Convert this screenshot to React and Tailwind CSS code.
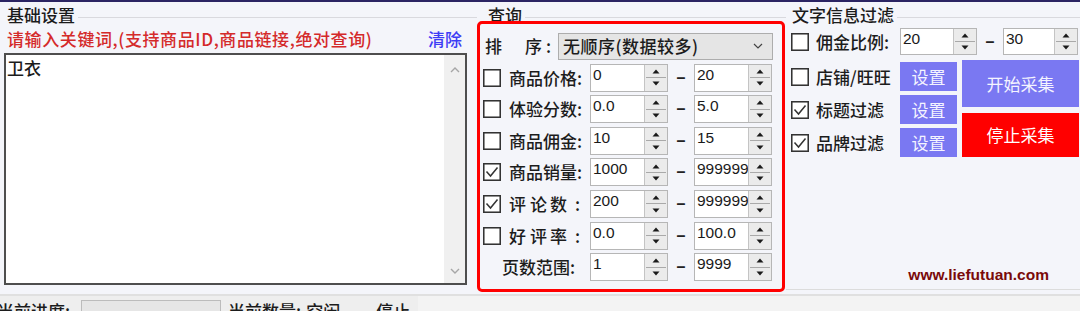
import React from 'react';

const Check = ({ on }) => (
  <svg width="18" height="18" viewBox="0 0 18 18" className="shrink-0">
    <rect x="0.75" y="0.75" width="16.5" height="16.5" fill="#fff" stroke="#333" strokeWidth="1.6" />
    {on && <polyline points="3.5,8.5 7.5,13 14.5,4.5" fill="none" stroke="#333" strokeWidth="1.5" />}
  </svg>
);

const Arrow = ({ up }) => (
  <svg width="8" height="5" viewBox="0 0 8 5">
    <polygon points={up ? '4,0.5 7.5,4.5 0.5,4.5' : '0.5,0.5 7.5,0.5 4,4.5'} fill="#1a1a1a" />
  </svg>
);

const Spin = ({ value, className }) => (
  <div className={`flex h-full shrink-0 border border-[#b6b6b6] bg-white ${className}`}>
    <div className="flex-1 overflow-hidden whitespace-nowrap pl-[2px] pt-[1px] font-['Liberation_Sans',sans-serif] text-[15.5px] leading-[18px] text-[#1a1a1a]">
      {value}
    </div>
    <div className="flex w-[23px] flex-col border-l border-[#c4c4c4] bg-[#ebebeb] p-[1px]">
      <div className="flex flex-1 items-center justify-center border-b border-[#a9a9a9]">
        <Arrow up />
      </div>
      <div className="flex flex-1 items-center justify-center">
        <Arrow />
      </div>
    </div>
  </div>
);

const Dash = ({ className }) => (
  <div className={`flex shrink-0 justify-center font-['Liberation_Sans',sans-serif] text-[16px] font-bold text-[#222] ${className}`}>
    –
  </div>
);

const QueryRow = ({ on, label, a, b }) => (
  <div className="flex h-[28px] items-center pl-[3px]">
    <Check on={on} />
    <div className="ml-[8px] flex w-[81px] text-[17px] font-medium leading-[20px]">{label}</div>
    <Spin value={a} className="w-[78px]" />
    <Dash className="w-[26px]" />
    <Spin value={b} className="w-[78px]" />
  </div>
);

const Spaced = ({ chars }) => (
  <>
    <span>{chars[0]}</span>
    <span className="ml-[4px]">{chars[1]}</span>
    <span className="ml-[3px]">{chars[2]}</span>
    <span className="ml-[8px]">:</span>
  </>
);

const FilterRow = ({ on, label }) => (
  <div className="flex h-[29px] items-center pl-[5px]">
    <Check on={on} />
    <div className="ml-[7px] w-[84px] whitespace-nowrap text-[17px] font-medium leading-[20px]">{label}</div>
    <div className="flex h-full w-[57px] items-center justify-center bg-[#7a78f2] text-[17px] leading-[20px] text-[#f4f4ff]">
      设置
    </div>
  </div>
);

const GroupHead = ({ title, indent }) => (
  <div className="flex h-[26px] shrink-0">
    <div className={`pt-[3px] text-[17px] font-medium leading-[20px] whitespace-nowrap ${indent}`}>{title}</div>
    <div className="ml-[3px] mt-[15px] h-px flex-1 bg-[#d9d9de]" />
  </div>
);

export default function App() {
  return (
    <div className="flex h-[311px] w-[1080px] flex-col overflow-hidden bg-[#f4f5fa] font-['Noto_Sans_CJK_SC',sans-serif] text-[#1c1c1c]">
      <div className="h-[2px] shrink-0 bg-[#2b2463]" />

      <div className="flex h-[292px] shrink-0">
        {/* 基础设置 */}
        <div className="flex w-[477px] shrink-0 flex-col">
          <GroupHead title="基础设置" indent="pl-[7px]" />
          <div className="flex h-[22px] w-[466px] items-center justify-between pl-[7px] pr-[4px] text-[17px] font-medium leading-[20px]">
            <span className="whitespace-nowrap tracking-[0.6px] text-[#d42a2a]">请输入关键词,(支持商品ID,商品链接,绝对查询)</span>
            <span className="text-[#3d3df5]">清除</span>
          </div>
          <div className="ml-[4px] mt-[3px] flex h-[232px] w-[463px] border-2 border-[#4e4e4e] bg-white">
            <div className="flex-1 pl-[1px] pt-[3px] text-[17px] font-medium leading-[20px]">卫衣</div>
            <div className="flex w-[21px] flex-col items-center justify-between bg-[#f0f0f0] pb-[9px] pt-[12px]">
              <svg width="10" height="6" viewBox="0 0 10 6">
                <polyline points="1,5 5,1 9,5" fill="none" stroke="#a6a6a6" strokeWidth="1.4" />
              </svg>
              <svg width="10" height="6" viewBox="0 0 10 6">
                <polyline points="1,1 5,5 9,1" fill="none" stroke="#a6a6a6" strokeWidth="1.4" />
              </svg>
            </div>
          </div>
        </div>

        {/* 查询 */}
        <div className="flex w-[309px] shrink-0 flex-col">
          <GroupHead title="查询" indent="pl-[11px]" />
          <div className="relative z-10 -mt-[7px] h-[271px] w-[308px] rounded-[5px] border-[3px] border-[#ff0000] bg-[#f4f5fa] pt-[8px]">
            <div className="flex flex-col gap-[3.6px]">
              <div className="flex h-[28px] items-center pl-[5px]">
                <div className="flex w-[73px] text-[17px] font-medium leading-[20px]">
                  <span>排</span>
                  <span className="ml-[23px]">序</span>
                  <span className="ml-[4px]">:</span>
                </div>
                <div className="flex h-[27px] w-[215px] items-center justify-between border border-[#adadad] bg-[#e5e5e5] pl-[4px] pr-[9px]">
                  <span className="text-[17px] font-medium leading-[20px] tracking-[0.5px]">无顺序(数据较多)</span>
                  <svg width="10" height="6" viewBox="0 0 10 6">
                    <polyline points="1,1 5,5 9,1" fill="none" stroke="#444" strokeWidth="1.2" />
                  </svg>
                </div>
              </div>
              <QueryRow label="商品价格:" a="0" b="20" />
              <QueryRow label="体验分数:" a="0.0" b="5.0" />
              <QueryRow label="商品佣金:" a="10" b="15" />
              <QueryRow on label="商品销量:" a="1000" b="999999" />
              <QueryRow on label={<Spaced chars={['评', '论', '数']} />} a="200" b="999999" />
              <QueryRow label={<Spaced chars={['好', '评', '率']} />} a="0.0" b="100.0" />
              <div className="flex h-[28px] items-center pl-[22px]">
                <div className="w-[88px] text-[17px] font-medium leading-[20px]">页数范围:</div>
                <Spin value="1" className="w-[78px]" />
                <Dash className="w-[26px]" />
                <Spin value="9999" className="w-[78px]" />
              </div>
            </div>
          </div>
        </div>

        {/* 文字信息过滤 */}
        <div className="flex flex-1 flex-col">
          <GroupHead title="文字信息过滤" indent="pl-[6px]" />
          <div className="flex h-[27px] items-center pl-[5px]">
            <Check />
            <div className="ml-[7px] w-[84px] text-[17px] font-medium leading-[20px]">佣金比例:</div>
            <Spin value="20" className="w-[77px]" />
            <Dash className="w-[26px]" />
            <Spin value="30" className="w-[75px]" />
          </div>
          <div className="mt-[5px] flex">
            <div className="flex flex-col gap-[4px] pt-[2px]">
              <FilterRow label="店铺/旺旺" />
              <FilterRow on label="标题过滤" />
              <FilterRow on label="品牌过滤" />
            </div>
            <div className="ml-[5px] flex w-[117px] flex-col">
              <div className="flex h-[47px] items-center justify-center bg-[#7a78f2] text-[17px] leading-[20px] text-[#f4f4ff]">
                开始采集
              </div>
              <div className="mt-[6px] flex h-[44px] items-center justify-center bg-[#ff0000] text-[17px] leading-[20px] text-white">
                停止采集
              </div>
            </div>
          </div>
          <div className="mt-auto self-end pr-[31px] font-['Liberation_Sans',sans-serif] text-[15.5px] font-bold leading-[18px] text-[#7a0a0a]">
            www.liefutuan.com
          </div>
          <div className="mb-[4px] mt-[5px] h-px bg-[#dcdcdc]" />
        </div>
      </div>

      <div className="h-[2px] shrink-0 bg-[#e0e0e0]" />

      {/* 状态栏 */}
      <div className="flex flex-1">
        <div className="flex w-[418px] bg-[#eeeeee] text-[17px] font-medium leading-[20px]">
          <span className="-ml-[3px] whitespace-nowrap pt-[5px]">当前进度:</span>
          <div className="ml-[11px] mt-[4px] h-[20px] w-[140px] shrink-0 border border-[#bcbcbc] bg-[#e6e6e6]" />
          <span className="ml-[7px] whitespace-nowrap pt-[5px]">当前数量:</span>
          <span className="ml-[5px] whitespace-nowrap pt-[5px]">空闲</span>
          <span className="ml-[36px] whitespace-nowrap pt-[5px]">停止</span>
        </div>
        <div className="flex-1 bg-[#f3f3f3]" />
      </div>
    </div>
  );
}
